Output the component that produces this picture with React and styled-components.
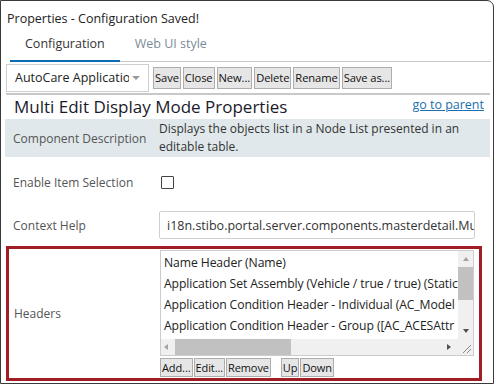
import React from "react";
import styled, { createGlobalStyle } from "styled-components";

const Global = createGlobalStyle`
  html, body {
    margin: 0;
    padding: 0;
    background: #fff;
  }
  body {
    font-family: "Open Sans", "Noto Sans", sans-serif;
    font-size: 12px;
    color: #333;
  }
`;

const Window = styled.div`
  box-sizing: border-box;
  width: 494px;
  height: 384px;
  border: 1px solid #3a3a3a;
  border-top-right-radius: 7px;
  background: #fff;
  display: flex;
  flex-direction: column;
  overflow: hidden;
`;

const Title = styled.div`
  height: 30px;
  padding: 9px 0 0 6px;
  box-sizing: border-box;
  font-size: 12.5px;
  color: #222;
`;

const TabBar = styled.div`
  display: flex;
  margin: 0 2px 0 9px;
  border-bottom: 1px solid #c6c6c6;
  height: 31px;
  box-sizing: border-box;
`;

const Tab = styled.div`
  padding: 4px 15px 0;
  font-size: 12.5px;
  color: ${(p) => (p.$active ? "#333" : "#7d8b99")};
  border-bottom: 2px solid ${(p) => (p.$active ? "#0a6bb1" : "transparent")};
  margin-bottom: -1px;
`;

const Toolbar = styled.div`
  display: flex;
  align-items: center;
  gap: 2px;
  margin: 1px 3px 0 5px;
  padding-bottom: 1px;
  border-bottom: 2px solid #c8c8c8;
  height: 29px;
`;

const Dropdown = styled.div`
  box-sizing: border-box;
  width: 143px;
  height: 28px;
  border: 1px solid #cfcfcf;
  display: flex;
  align-items: center;
  padding-left: 8px;
  margin-right: 2px;
  font-size: 12.5px;
  color: #222;
  white-space: nowrap;
  overflow: hidden;
`;

const DropText = styled.span`
  width: 114px;
  overflow: hidden;
  text-overflow: clip;
`;

const Caret = styled.span`
  width: 0;
  height: 0;
  margin-left: 3px;
  border-left: 4px solid transparent;
  border-right: 4px solid transparent;
  border-top: 4px solid #999;
`;

const Button = styled.button`
  font-family: inherit;
  font-size: ${(p) => (p.$small ? "11px" : "11.2px")};
  letter-spacing: -0.1px;
  color: #111;
  background: #e6e6e6;
  border: 1px solid #adadad;
  padding: 0 1px;
  height: ${(p) => (p.$small ? "19px" : "22px")};
  line-height: 1;
  border-radius: 0;
  margin-left: ${(p) => p.$gap || 0}px;
`;

const Content = styled.div`
  padding: 0 3px 0 4px;
  display: flex;
  flex-direction: column;
`;

const HeadingRow = styled.div`
  display: flex;
  justify-content: space-between;
  align-items: flex-start;
  height: 24px;
  padding: 0 6px 0 9px;
`;

const Heading = styled.div`
  font-size: 17px;
  color: #1a1a2a;
  line-height: 24px;
`;

const Link = styled.a`
  font-size: 12.5px;
  color: #1b6fae;
  text-decoration: underline;
  margin-top: 1px;
`;

const Row = styled.div`
  display: grid;
  grid-template-columns: 154px 1fr;
  align-items: center;
  min-height: ${(p) => p.$h}px;
  padding-bottom: ${(p) => p.$pb || 0}px;
  background: ${(p) => p.$bg || "transparent"};
  box-sizing: border-box;
`;

const Label = styled.div`
  padding-left: 8px;
  font-size: 12px;
  color: #555;
`;

const Value = styled.div`
  font-size: 12px;
  color: #333;
  line-height: 18px;
  padding-right: 8px;
`;

const Checkbox = styled.span`
  display: block;
  width: 11px;
  height: 11px;
  border: 1.5px solid #444;
  border-radius: 1px;
  margin-left: 2px;
`;

const TextInput = styled.div`
  box-sizing: border-box;
  width: 316px;
  height: 28px;
  border: 1px solid #cfcfcf;
  border-radius: 2px;
  padding-left: 7px;
  display: flex;
  align-items: center;
  white-space: nowrap;
  overflow: hidden;
  font-size: 12.5px;
  color: #333;
`;

const HeadersBox = styled.div`
  display: grid;
  grid-template-columns: 151px 1fr;
  align-items: center;
  margin: 1px 8px 0 1px;
  border: 3px solid #a01d26;
  height: 135px;
  box-sizing: border-box;
`;

const HeadersLabel = styled.div`
  padding-left: 5px;
  font-size: 12px;
  color: #555;
`;

const ListArea = styled.div`
  align-self: start;
  display: flex;
  flex-direction: column;
  gap: 2px;
  padding-top: 1px;
`;

const ListBox = styled.div`
  box-sizing: border-box;
  width: 314px;
  height: 106px;
  border: 1px solid #cccccc;
  display: grid;
  grid-template-columns: 1fr 15px;
  grid-template-rows: 1fr 16px;
`;

const Items = styled.div`
  overflow: hidden;
  padding: 1px 0 0 3px;
  white-space: nowrap;
`;

const Item = styled.div`
  font-size: 12.2px;
  letter-spacing: -0.1px;
  color: #222;
  line-height: 21px;
`;

const VScroll = styled.div`
  background: #f0f0f0;
  display: flex;
  flex-direction: column;
  align-items: center;
`;

const HScroll = styled.div`
  background: #f0f0f0;
  display: flex;
  align-items: center;
  padding: 0 3px;
`;

const Thumb = styled.div`
  background: #c1c1c1;
`;

const Arrow = styled.span`
  width: 0;
  height: 0;
  border: 3.5px solid transparent;
  ${(p) => p.$dir === "up" && "border-bottom: 4px solid #a3a3a3; border-top-width: 0;"}
  ${(p) => p.$dir === "down" && "border-top: 4px solid #505050; border-bottom-width: 0;"}
  ${(p) => p.$dir === "left" && "border-right: 4px solid #a3a3a3; border-left-width: 0;"}
  ${(p) => p.$dir === "right" && "border-left: 4px solid #505050; border-right-width: 0;"}
`;

const Corner = styled.div`
  background: #f0f0f0;
  display: flex;
  align-items: flex-end;
  justify-content: flex-end;
`;

const ButtonRow = styled.div`
  display: flex;
  gap: 1px;
`;

const items = [
  "Name Header (Name)",
  "Application Set Assembly (Vehicle / true / true) (Static",
  "Application Condition Header - Individual (AC_Model",
  "Application Condition Header - Group ([AC_ACESAttr",
];

export default function App() {
  return (
    <>
      <Global />
      <Window>
        <Title>Properties - Configuration Saved!</Title>
        <TabBar>
          <Tab $active>Configuration</Tab>
          <Tab>Web UI style</Tab>
        </TabBar>
        <Toolbar>
          <Dropdown>
            <DropText>AutoCare Application Set</DropText>
            <Caret />
          </Dropdown>
          <Button>Save</Button>
          <Button>Close</Button>
          <Button>New...</Button>
          <Button>Delete</Button>
          <Button>Rename</Button>
          <Button>Save as...</Button>
        </Toolbar>
        <Content>
          <HeadingRow>
            <Heading>Multi Edit Display Mode Properties</Heading>
            <Link>go to parent</Link>
          </HeadingRow>
          <Row $h={38} $bg="#e0e8eb">
            <Label>Component Description</Label>
            <Value>
              Displays the objects list in a Node List presented in an editable table.
            </Value>
          </Row>
          <Row $h={51}>
            <Label>Enable Item Selection</Label>
            <Checkbox />
          </Row>
          <Row $h={37} $pb={3}>
            <Label>Context Help</Label>
            <TextInput>i18n.stibo.portal.server.components.masterdetail.MultiEditDisplayMode</TextInput>
          </Row>
          <HeadersBox>
            <HeadersLabel>Headers</HeadersLabel>
            <ListArea>
              <ListBox>
                <Items>
                  {items.map((t) => (
                    <Item key={t}>{t}</Item>
                  ))}
                </Items>
                <VScroll>
                  <Arrow $dir="up" style={{ marginTop: 6 }} />
                  <Thumb style={{ width: 15, height: 33, marginTop: 6 }} />
                  <div style={{ flex: 1 }} />
                  <Arrow $dir="down" style={{ marginBottom: 6 }} />
                </VScroll>
                <HScroll>
                  <Arrow $dir="left" />
                  <Thumb style={{ width: 116, height: 16, marginLeft: 7 }} />
                  <div style={{ flex: 1 }} />
                  <Arrow $dir="right" style={{ marginRight: 4 }} />
                </HScroll>
                <Corner>
                  <svg width="15" height="16" viewBox="0 0 15 16">
                    <path d="M5 14 L13 6 M9 14 L13 10" stroke="#888" strokeWidth="1" />
                  </svg>
                </Corner>
              </ListBox>
              <ButtonRow>
                <Button $small>Add...</Button>
                <Button $small>Edit...</Button>
                <Button $small>Remove</Button>
                <Button $small $gap={9}>Up</Button>
                <Button $small>Down</Button>
              </ButtonRow>
            </ListArea>
          </HeadersBox>
        </Content>
      </Window>
    </>
  );
}
